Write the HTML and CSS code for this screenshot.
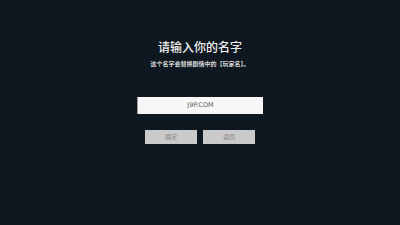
FILE: index.html
```html
<!DOCTYPE html>
<html>
<head>
<meta charset="utf-8">
<link rel="stylesheet" href="styles.css">
</head>
<body>
<div class="panel">
  <h1 class="title">请输入你的名字</h1>
  <p class="hint">这个名字会替换剧情中的【玩家名】。</p>
  <div class="field">J9P.COM</div>
  <div class="actions">
    <button class="btn">确定</button>
    <button class="btn">返回</button>
  </div>
</div>
</body>
</html>
```
FILE: styles.css
```css
html, body {
  margin: 0;
  padding: 0;
  width: 400px;
  height: 225px;
  background: #0f1720;
  overflow: hidden;
  font-family: "Noto Sans CJK SC", "Noto Sans", sans-serif;
}
.panel {
  display: flex;
  flex-direction: column;
  align-items: center;
  padding-top: 39px;
}
.title {
  margin: 0;
  font-size: 12px;
  line-height: 16px;
  font-weight: 500;
  color: #f0f0f0;
}
.hint {
  margin: 5px 0 0;
  font-size: 6px;
  line-height: 8px;
  color: #d8d8d8;
  font-weight: 700;
}
.field {
  margin-top: 29px;
  width: 126px;
  height: 17px;
  box-sizing: border-box;
  background: #f7f7f7;
  border-left: 1px solid #9a9a9a;
  color: #5e5e5e;
  font-family: "DejaVu Sans", sans-serif;
  font-size: 6.5px;
  line-height: 17px;
  text-align: center;
}
.actions {
  margin-top: 16px;
  display: flex;
  gap: 6px;
}
.btn {
  width: 52px;
  height: 14px;
  border: none;
  padding: 0;
  background: #cacaca;
  color: #8a8a8a;
  font-family: "Noto Sans CJK SC", sans-serif;
  font-size: 6px;
  line-height: 14px;
}
```
